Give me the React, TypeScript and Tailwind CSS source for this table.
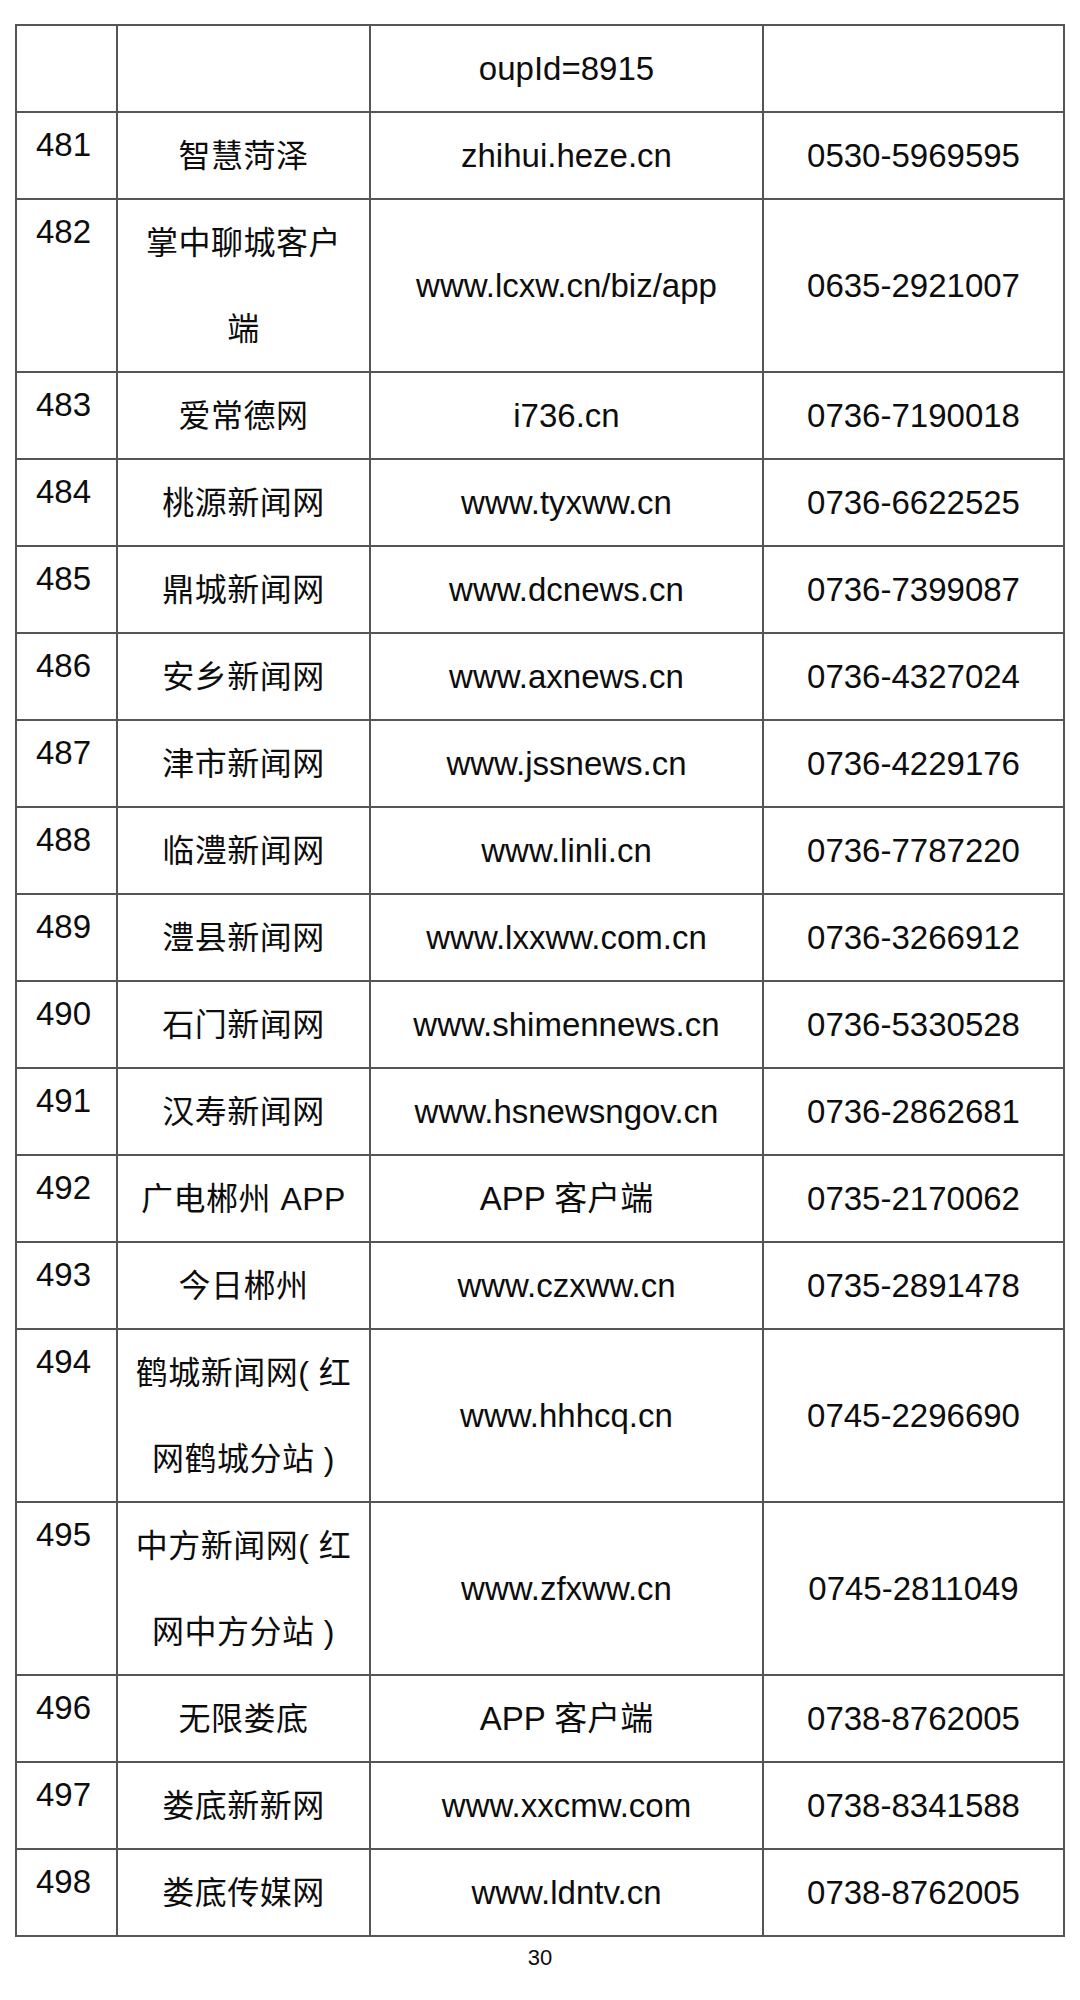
type Row = {
  no?: string;
  name: string[];
  site: string;
  phone: string;
  tall?: boolean;
};

const rows: Row[] = [
  { name: [], site: "oupId=8915", phone: "" },
  { no: "481", name: ["智慧菏泽"], site: "zhihui.heze.cn", phone: "0530-5969595" },
  { no: "482", name: ["掌中聊城客户", "端"], site: "www.lcxw.cn/biz/app", phone: "0635-2921007", tall: true },
  { no: "483", name: ["爱常德网"], site: "i736.cn", phone: "0736-7190018" },
  { no: "484", name: ["桃源新闻网"], site: "www.tyxww.cn", phone: "0736-6622525" },
  { no: "485", name: ["鼎城新闻网"], site: "www.dcnews.cn", phone: "0736-7399087" },
  { no: "486", name: ["安乡新闻网"], site: "www.axnews.cn", phone: "0736-4327024" },
  { no: "487", name: ["津市新闻网"], site: "www.jssnews.cn", phone: "0736-4229176" },
  { no: "488", name: ["临澧新闻网"], site: "www.linli.cn", phone: "0736-7787220" },
  { no: "489", name: ["澧县新闻网"], site: "www.lxxww.com.cn", phone: "0736-3266912" },
  { no: "490", name: ["石门新闻网"], site: "www.shimennews.cn", phone: "0736-5330528" },
  { no: "491", name: ["汉寿新闻网"], site: "www.hsnewsngov.cn", phone: "0736-2862681" },
  { no: "492", name: ["广电郴州 APP"], site: "APP 客户端", phone: "0735-2170062" },
  { no: "493", name: ["今日郴州"], site: "www.czxww.cn", phone: "0735-2891478" },
  { no: "494", name: ["鹤城新闻网( 红", "网鹤城分站 )"], site: "www.hhhcq.cn", phone: "0745-2296690", tall: true },
  { no: "495", name: ["中方新闻网( 红", "网中方分站 )"], site: "www.zfxww.cn", phone: "0745-2811049", tall: true },
  { no: "496", name: ["无限娄底"], site: "APP 客户端", phone: "0738-8762005" },
  { no: "497", name: ["娄底新新网"], site: "www.xxcmw.com", phone: "0738-8341588" },
  { no: "498", name: ["娄底传媒网"], site: "www.ldntv.cn", phone: "0738-8762005" },
];

export default function App() {
  return (
    <div className="min-h-[2000px] w-[1080px] bg-white text-[#0d0d0d] font-['Liberation_Sans','Noto_Sans_CJK_SC',sans-serif]">
      <div className="pt-[24px] pl-[15px]">
        <div className="grid w-[1050px] grid-cols-[101px_253px_393px_301px] border-l-2 border-t-2 border-[#555] text-[33px]">
          {rows.map((r, i) => {
            const h = r.tall ? "h-[173px]" : "h-[87px]";
            const cell = `${h} border-r-2 border-b-2 border-[#555]`;
            return (
              <div key={i} className="contents">
                <div className={`${cell} pl-[19px] pt-[15px] leading-[33px]`}>{r.no}</div>
                <div className={`${cell} flex flex-col items-center justify-center text-center text-[32px] tracking-[0.5px]`}>
                  {r.name.map((line, j) => (
                    <div key={j} className="leading-[86px] whitespace-nowrap">
                      {line}
                    </div>
                  ))}
                </div>
                <div className={`${cell} flex items-center justify-center whitespace-nowrap`}>{r.site}</div>
                <div className={`${cell} flex items-center justify-center`}>{r.phone}</div>
              </div>
            );
          })}
        </div>
      </div>
      <div className="mt-[10px] text-center text-[22px] leading-none">30</div>
    </div>
  );
}
